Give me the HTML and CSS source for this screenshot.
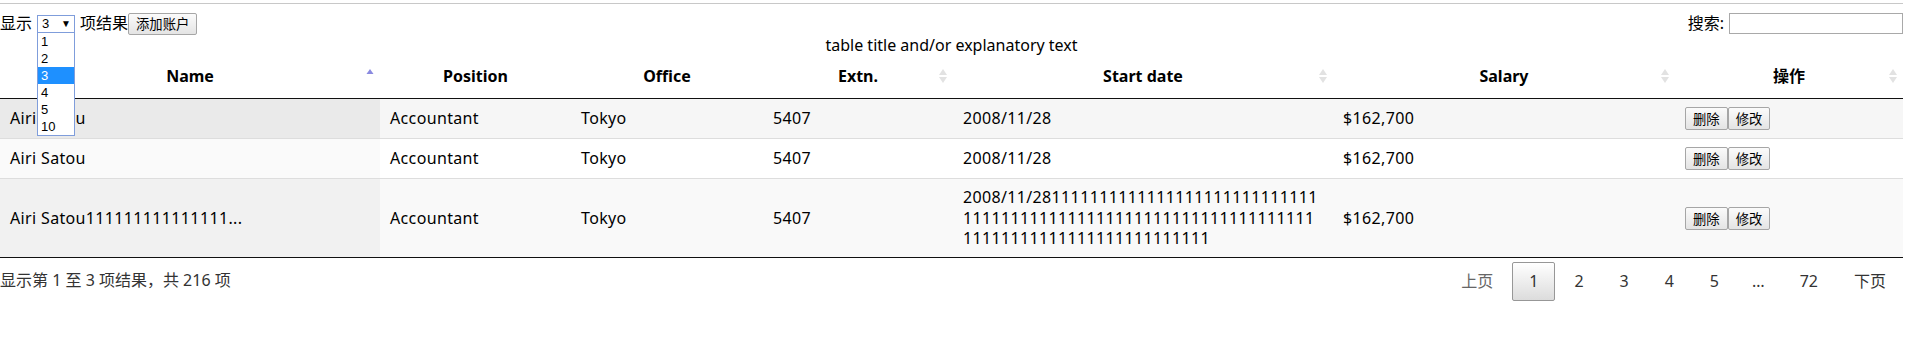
FILE: index.html
```html
<!DOCTYPE html>
<html lang="zh-CN">
<head>
<meta charset="utf-8">
<title>DataTables</title>
<link rel="stylesheet" href="styles.css">
</head>
<body>
<div class="page">
  <div class="topline"></div>
  <div class="toolbar">
    <div class="length">
      <span>显示</span>
      <span class="select-wrap">
        <span class="select"><span>3</span><span class="arrow">▼</span></span>
        <ul class="options">
          <li>1</li><li>2</li><li class="active">3</li><li>4</li><li>5</li><li>10</li>
        </ul>
      </span>
      <span>项结果</span><button class="btn">添加账户</button>
    </div>
    <label class="filter">搜索:<input class="search" type="text"></label>
  </div>
  <table class="dt">
    <caption>table title and/or explanatory text</caption>
    <colgroup>
      <col class="c1"><col class="c2"><col class="c3"><col class="c4"><col class="c5"><col class="c6"><col class="c7">
    </colgroup>
    <thead>
      <tr>
        <th>Name<svg class="sort" viewBox="0 0 10 16" width="10" height="16"><path d="M1.5 6 L5 1 L8.5 6 Z" fill="#8a8ae0"/></svg></th>
        <th>Position</th>
        <th>Office</th>
        <th>Extn.<svg class="sort" viewBox="0 0 10 16" width="10" height="16"><path d="M1 7 L5 1 L9 7 Z M1 9 L5 15 L9 9 Z" fill="#e2e2e2"/></svg></th>
        <th>Start date<svg class="sort" viewBox="0 0 10 16" width="10" height="16"><path d="M1 7 L5 1 L9 7 Z M1 9 L5 15 L9 9 Z" fill="#e2e2e2"/></svg></th>
        <th>Salary<svg class="sort" viewBox="0 0 10 16" width="10" height="16"><path d="M1 7 L5 1 L9 7 Z M1 9 L5 15 L9 9 Z" fill="#e2e2e2"/></svg></th>
        <th>操作<svg class="sort" viewBox="0 0 10 16" width="10" height="16"><path d="M1 7 L5 1 L9 7 Z M1 9 L5 15 L9 9 Z" fill="#e2e2e2"/></svg></th>
      </tr>
    </thead>
    <tbody>
      <tr class="hover">
        <td class="sorting">Airi Satou</td>
        <td>Accountant</td>
        <td>Tokyo</td>
        <td>5407</td>
        <td>2008/11/28</td>
        <td>$162,700</td>
        <td><button class="btn">删除</button><button class="btn">修改</button></td>
      </tr>
      <tr class="even">
        <td class="sorting">Airi Satou</td>
        <td>Accountant</td>
        <td>Tokyo</td>
        <td>5407</td>
        <td>2008/11/28</td>
        <td>$162,700</td>
        <td><button class="btn">删除</button><button class="btn">修改</button></td>
      </tr>
      <tr class="odd">
        <td class="sorting">Airi Satou111111111111111...</td>
        <td>Accountant</td>
        <td>Tokyo</td>
        <td>5407</td>
        <td class="wrap">2008/11/281111111111111111111111111111111111111111111111111111111111111111111111111111111111111111111</td>
        <td>$162,700</td>
        <td><button class="btn">删除</button><button class="btn">修改</button></td>
      </tr>
    </tbody>
  </table>
  <div class="footer">
    <div class="info">显示第 1 至 3 项结果，共 216 项</div>
    <div class="paginate">
      <span class="pbtn disabled">上页</span>
      <span class="pbtn current">1</span>
      <span class="pbtn">2</span>
      <span class="pbtn">3</span>
      <span class="pbtn">4</span>
      <span class="pbtn">5</span>
      <span class="ellipsis">…</span>
      <span class="pbtn">72</span>
      <span class="pbtn">下页</span>
    </div>
  </div>
</div>
</body>
</html>
```

FILE: styles.css
```css
* { box-sizing: border-box; }

html, body {
  margin: 0;
  padding: 0;
  background: #fff;
}

body {
  font-family: "Noto Sans", "Noto Sans CJK SC", sans-serif;
  font-size: 16px;
  line-height: 21px;
  color: #000;
}

.page {
  width: 1903px;
}

.topline {
  margin-top: 3px;
  height: 1px;
  background: #c8c8c8;
}

.toolbar {
  display: flex;
  justify-content: space-between;
  align-items: center;
  padding-top: 8px;
  height: 31px;
}

.length {
  display: flex;
  align-items: center;
  white-space: nowrap;
}

.select-wrap {
  position: relative;
  margin: 0 5px;
}

.select {
  display: flex;
  justify-content: space-between;
  align-items: center;
  width: 38px;
  height: 18px;
  border: 1px solid #7f9ddb;
  padding: 0 3px 0 4px;
  font-family: "Liberation Sans", sans-serif;
  font-size: 13px;
  line-height: 16px;
  background: #fff;
}

.select .arrow {
  font-size: 10px;
}

.options {
  position: absolute;
  left: 0;
  top: 17px;
  width: 38px;
  margin: 0;
  padding: 0;
  list-style: none;
  border: 1px solid #7f9ddb;
  background: #fff;
  font-family: "Liberation Sans", sans-serif;
  font-size: 13px;
  line-height: 17px;
  z-index: 5;
}

.options li {
  padding-left: 3px;
  height: 17px;
}

.options li.active {
  background: #1e90ff;
  color: #fff;
}

.btn {
  font-family: "Noto Sans CJK SC", sans-serif;
  font-size: 13.33px;
  line-height: 17px;
  height: 23px;
  padding: 1px 7px;
  margin: 0;
  border: 1px solid #a6a6a6;
  border-radius: 2px;
  background: linear-gradient(#fbfbfb, #e4e4e4);
  color: #000;
  vertical-align: middle;
}

.length .btn {
  height: 22px;
}

.filter {
  display: flex;
  align-items: center;
  white-space: nowrap;
}

.search {
  margin-left: 5px;
  width: 174px;
  height: 21px;
  border: 1px solid #a9a9a9;
  padding: 1px 2px;
}

.dt {
  width: 1903px;
  table-layout: fixed;
  border-collapse: separate;
  border-spacing: 0;
}

.dt caption {
  line-height: 21px;
  padding: 0;
}

.c1 { width: 380px; }
.c2 { width: 191px; }
.c3 { width: 192px; }
.c4 { width: 190px; }
.c5 { width: 380px; }
.c6 { width: 342px; }
.c7 { width: 228px; }

.dt th {
  position: relative;
  font-weight: bold;
  text-align: center;
  padding: 10px 18px 11px 18px;
  border-bottom: 1px solid #111;
}

.dt th .sort {
  position: absolute;
  right: 5px;
  top: 12px;
}

.dt td {
  padding: 8px 10px;
  border-top: 1px solid #ddd;
  vertical-align: middle;
  white-space: nowrap;
  overflow: hidden;
  letter-spacing: 0.35px;
}

.dt td.wrap {
  line-height: 20.5px;
}

.dt tbody tr:first-child td {
  border-top: none;
}

.dt tbody tr:last-child td {
  border-bottom: 1px solid #111;
}

.dt td.wrap {
  white-space: normal;
  word-break: break-all;
}

.dt tr.hover td { background: #f6f6f6; }
.dt tr.hover td.sorting { background: #eaeaea; }
.dt tr.even td { background: #fff; }
.dt tr.even td.sorting { background: #fafafa; }
.dt tr.odd td { background: #f9f9f9; }
.dt tr.odd td.sorting { background: #f1f1f1; }

.dt td .btn {
  letter-spacing: 0;
}

.footer {
  display: flex;
  justify-content: space-between;
  align-items: flex-start;
}

.info {
  padding-top: 12px;
  color: #333;
}

.paginate {
  display: flex;
  align-items: center;
  padding-top: 4px;
}

.pbtn {
  min-width: 24px;
  padding: 8px 16px;
  margin-left: 2px;
  border: 1px solid transparent;
  border-radius: 2px;
  color: #333;
  text-align: center;
}

.pbtn.disabled {
  color: #666;
}

.pbtn.current {
  border-color: #979797;
  background: linear-gradient(#fff, #dcdcdc);
}

.ellipsis {
  padding: 0 16px;
  color: #333;
}
```
